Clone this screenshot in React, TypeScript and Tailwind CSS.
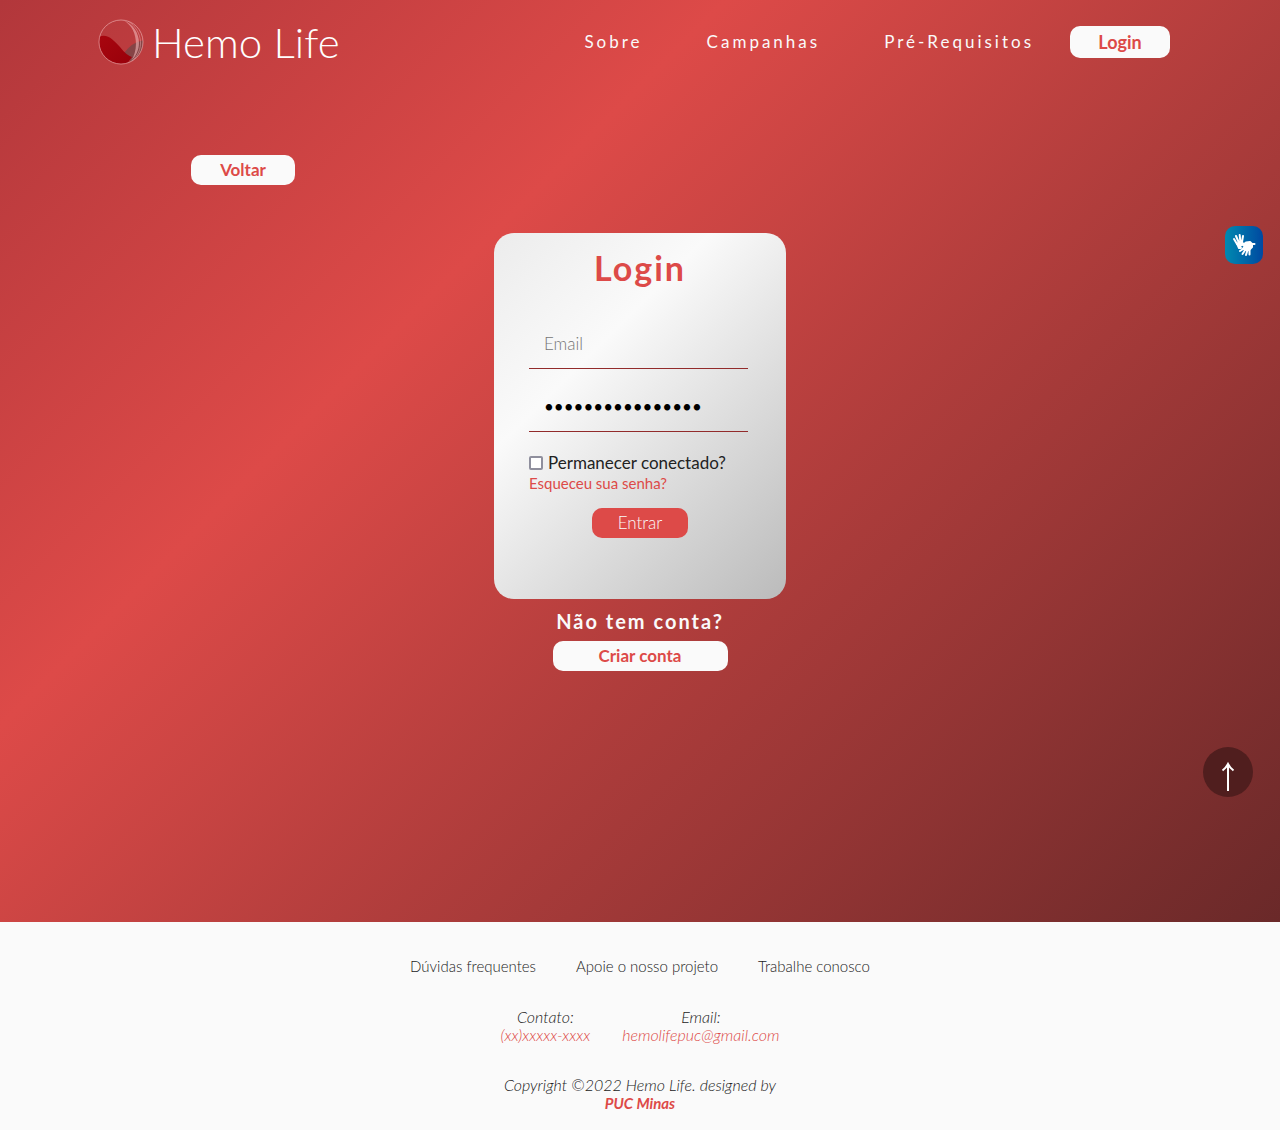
import React from 'react';

function Logo() {
  return (
    <a href="#" className="flex items-center gap-2 text-white">
      <svg viewBox="0 0 46 46" className="size-[46px]" aria-hidden="true">
        <defs>
          <linearGradient id="blood" x1="0" y1="0" x2="1" y2="1">
            <stop offset="0" stopColor="#a8060f" />
            <stop offset="1" stopColor="#98000a" />
          </linearGradient>
          <clipPath id="ball">
            <circle cx="23" cy="23" r="22" />
          </clipPath>
        </defs>
        <g clipPath="url(#ball)">
          <path d="M26 34 Q34 23 46 21 V34 L34 44Z" fill="#7d4548" opacity=".85" />
          <path d="M0 18 C10 14 15 21 22 28 Q28 36 34 38 L28 46 H0Z" fill="url(#blood)" />
          <path d="M25 1 C43 8 46 30 33 42 C41 30 40 9 25 1Z" fill="#f1b5b7" opacity=".6" />
          <path d="M30 2 C46 13 46 32 34 42" fill="none" stroke="#eca9ac" strokeWidth="1" opacity=".5" />
        </g>
        <circle cx="23" cy="23" r="22" fill="none" stroke="#f0b6b8" strokeWidth="1" opacity=".6" />
      </svg>
      <span className="font-['Lato'] text-[42px] leading-[50px] font-light">Hemo Life</span>
    </a>
  );
}

function Header() {
  return (
    <header className="flex flex-wrap items-center justify-between pt-[17px] pr-[110px] pb-px pl-[98px]">
      <Logo />
      <nav className="flex items-center text-[17px] tracking-[3px] text-[#fafafa]">
        <a href="#sobre" className="mr-16">Sobre</a>
        <a href="#campanhas" className="mr-16">Campanhas</a>
        <a href="#requisitos" className="mr-9">Pré-Requisitos</a>
        <button className="h-8 w-[100px] rounded-[10px] bg-[#fafafa] text-lg leading-8 font-bold tracking-normal text-[#dd4a48]">Login</button>
      </nav>
    </header>
  );
}

function LoginCard() {
  return (
    <form
      onSubmit={(e) => e.preventDefault()}
      className="flex w-[292px] flex-col rounded-[20px] bg-[linear-gradient(135deg,#ececec_0%,#fafafa_33%,#bbbbbb_100%)] px-[35px] pt-3 pb-[61px]"
    >
      <h1 className="text-center text-[34px] leading-[46px] font-bold tracking-[2px] text-[#dd4a48]">Login</h1>
      <input
        aria-label="Email"
        type="email"
        placeholder="Email"
        className="mt-7 mr-[3px] h-[50px] border-b border-[#922b2b] px-[15px] text-[17px] font-light placeholder:text-[#757575] focus:outline-none"
      />
      <input
        aria-label="Senha"
        type="password"
        defaultValue="senhasecreta1234"
        className="mt-[13px] mr-[3px] h-[50px] border-b border-[#922b2b] px-[15px] text-[17px] text-black focus:outline-none"
      />
      <label className="mt-5 flex h-[22px] items-center gap-[5px] text-[17px] whitespace-nowrap text-[#222]">
        <input type="checkbox" className="size-[14px] appearance-none rounded-[2px] border-2 border-[#8f8f9d] bg-white checked:bg-[#dd4a48]" />
        Permanecer conectado?
      </label>
      <a href="#senha" className="text-[15px] leading-[18px] text-[#dd4a48]">Esqueceu sua senha?</a>
      <button className="mt-4 h-[30px] w-24 self-center rounded-[10px] bg-[#dd4a48] text-[17px] font-light text-[#fafafa]">Entrar</button>
    </form>
  );
}

function Footer() {
  return (
    <footer className="flex flex-col items-center bg-[#fafafa] px-4 pt-[33px] pb-[18px] text-base leading-[18px] font-light text-[#222]">
      <nav className="flex flex-wrap justify-center gap-10 text-[15px] leading-[22px]">
        <a href="#duvidas">Dúvidas frequentes</a>
        <a href="#apoie">Apoie o nosso projeto</a>
        <a href="#trabalhe">Trabalhe conosco</a>
      </nav>
      <address className="mt-[31px] flex gap-8 text-center">
        <div>
          <p>Contato:</p>
          <a href="tel:" className="text-[#dd4a48]">(xx)xxxxx-xxxx</a>
        </div>
        <div>
          <p>Email:</p>
          <a href="mailto:hemolifepuc@gmail.com" className="text-[#dd4a48]">hemolifepuc@gmail.com</a>
        </div>
      </address>
      <p className="mt-8 text-center italic">
        Copyright ©2022 Hemo Life. designed by
        <br />
        <a href="#puc" className="text-[15px] font-bold text-[#dd4a48]">PUC Minas</a>
      </p>
    </footer>
  );
}

export default function App() {
  return (
    <div className="font-['Lato',sans-serif]">
      <main className="bg-[linear-gradient(135deg,#b2373b_0%,#dd4a48_33%,#6a2929_100%)] pb-[251px]">
        <Header />
        <button className="mt-[87px] ml-[191px] block h-[30px] w-[104px] rounded-[10px] bg-[#fafafa] text-[17px] font-bold text-[#dd4a48]">Voltar</button>
        <section className="mt-12 flex flex-col items-center">
          <LoginCard />
          <h2 className="mt-2 text-xl leading-7 font-bold tracking-[2px] text-[#fafafa]">Não tem conta?</h2>
          <button className="mt-1.5 h-[30px] w-[175px] rounded-[10px] bg-[#fafafa] text-[17px] font-bold text-[#dd4a48]">Criar conta</button>
        </section>
      </main>
      <Footer />
      <button aria-label="Libras" className="fixed top-[226px] right-[17px] size-[38px] rounded-[10px] bg-linear-to-r from-[#0089b0] to-[#0048a0] text-white">
        <svg viewBox="0 0 38 38" fill="none" stroke="currentColor" strokeLinecap="round" strokeLinejoin="round" strokeWidth="2">
          <path d="M12 18 9 13M14 17 11 10M15.500 17 14.700 9M17 16 18 10" />
          <path d="M12 17.500 L17 16.500 L18.500 18 L15 20 L16 22 L14 22Z" fill="currentColor" />
          <path d="M18 19 L21 16.500 L25 16 L27 18 V21 L24 24 H20 L18 22.500 L20 20Z" fill="currentColor" />
          <path d="M19 22.500 15 25M20.500 23.500 17.500 28M22.500 24 21 29M24.500 23 24.500 28.500M27 18 29.500 18" />
        </svg>
      </button>
      <a href="#" aria-label="Voltar ao topo" className="fixed top-[747px] right-[27px] flex size-[50px] items-center justify-center rounded-full bg-[#501e1e] text-white">
        <svg viewBox="0 0 50 50" fill="none" stroke="currentColor" strokeWidth="2">
          <path d="M25 17 V44M19.500 23.500 Q23 21 25 17 Q27 21 30.500 23.500" />
        </svg>
      </a>
    </div>
  );
}
